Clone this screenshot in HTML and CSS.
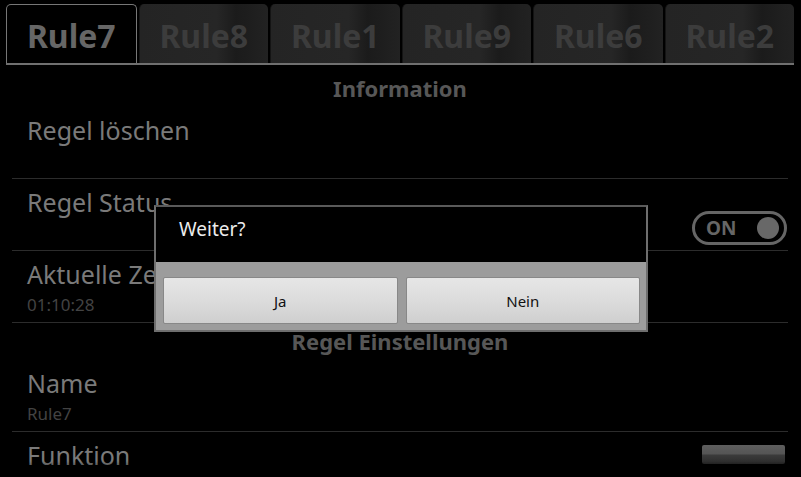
FILE: index.html
```html
<!DOCTYPE html>
<html lang="de">
<head>
    <meta charset="UTF-8">
    <meta name="viewport" content="width=device-width, initial-scale=1.0">
    <title>Regeln</title>
    <link rel="stylesheet" href="styles.css">
</head>
<body>
<div class="screen">
    <div class="tabs">
        <div class="tab tab-active">Rule7</div>
        <div class="tab">Rule8</div>
        <div class="tab">Rule1</div>
        <div class="tab">Rule9</div>
        <div class="tab">Rule6</div>
        <div class="tab">Rule2</div>
    </div>

    <div class="prefs">
        <div class="category category-first">Information</div>
        <div class="pref">
            <div class="pref-title">Regel löschen</div>
        </div>
        <div class="pref pref-switch">
            <div class="pref-title">Regel Status</div>
            <div class="toggle"><span class="toggle-label">ON</span><span class="knob"></span></div>
        </div>
        <div class="pref">
            <div class="pref-title">Aktuelle Zeit</div>
            <div class="pref-summary">01:10:28</div>
        </div>

        <div class="category">Regel Einstellungen</div>
        <div class="pref">
            <div class="pref-title">Name</div>
            <div class="pref-summary">Rule7</div>
        </div>
        <div class="pref pref-switch">
            <div class="pref-title">Funktion</div>
            <div class="spinner"></div>
        </div>
    </div>

    <div class="fade"></div>

    <!-- Bestätigungsdialog -->
    <div class="dialog">
        <div class="dialog-title">Weiter?</div>
        <div class="dialog-buttons">
            <button class="dialog-btn">Ja</button>
            <button class="dialog-btn">Nein</button>
        </div>
    </div>
</div>
</body>
</html>
```

FILE: styles.css
```css
body {
    margin: 0;
    background: #000;
    font-family: "Noto Sans", "Open Sans", sans-serif;
}
.screen {
    position: relative;
    width: 801px;
    height: 477px;
    overflow: hidden;
    background: #000;
}
.tabs {
    display: flex;
    gap: 2px;
    margin: 0 7px 0 6px;
    padding-top: 4px;
    border-bottom: 2px solid #707070;
}
.tab {
    flex: 1;
    height: 59px;
    box-sizing: border-box;
    padding-top: 3px;
    display: flex;
    align-items: center;
    justify-content: center;
    font-size: 32px;
    font-weight: bold;
    color: #3c3c3c;
    background: linear-gradient(90deg, #242424 0%, #262626 60%, #1b1b1b 75%, #222 100%);
    border-left: 1px solid #141414;
    border-radius: 5px 5px 0 0;
}
.tab-active {
    background: #000;
    color: #666;
    border: 1px solid #777;
    border-bottom: none;
}
.prefs {
    margin: 0 13px 0 12px;
}
.category {
    height: 37px;
    box-sizing: border-box;
    padding-top: 5px;
    text-align: center;
    font-size: 22px;
    line-height: 27px;
    font-weight: bold;
    color: #575757;
}
.category-first {
    margin-top: 5px;
}
.pref {
    height: 72px;
    box-sizing: border-box;
    padding: 8px 0 0 15px;
    border-bottom: 1px solid #2c2c2c;
}
.pref-switch {
    display: flex;
    justify-content: space-between;
}
.pref-title {
    font-size: 25px;
    line-height: 30px;
    color: #7a7a7a;
}
.pref-summary {
    margin-top: 5px;
    font-size: 17px;
    line-height: 22px;
    color: #434343;
}
.toggle {
    align-self: flex-end;
    margin: 0 1px 5px 0;
    width: 95px;
    height: 34px;
    box-sizing: border-box;
    border: 3px solid #666;
    border-radius: 17px;
    display: flex;
    align-items: center;
    justify-content: space-between;
    padding: 0 5px 0 11px;
}
.toggle-label {
    font-size: 19px;
    font-weight: bold;
    color: #666;
}
.knob {
    width: 22px;
    height: 22px;
    border-radius: 50%;
    background: #686868;
}
.spinner {
    margin: 5px 3px 0 0;
    width: 83px;
    height: 19px;
    border-radius: 2px;
    background: linear-gradient(#5e5e5e 0%, #555 45%, #3a3a3a 55%, #2a2a2a 100%);
}
.fade {
    position: absolute;
    left: 0;
    right: 0;
    bottom: 0;
    height: 16px;
    background: linear-gradient(rgba(0, 0, 0, 0), #000);
}
.dialog {
    position: absolute;
    left: 154px;
    top: 205px;
    width: 494px;
    height: 127px;
    box-sizing: border-box;
    border: 2px solid #6e6e6e;
    border-top-color: #5a5a5a;
    background: #000;
}
.dialog-title {
    height: 55px;
    box-sizing: border-box;
    padding: 9px 0 0 23px;
    font-size: 19px;
    line-height: 26px;
    color: #ececec;
}
.dialog-buttons {
    display: flex;
    gap: 8px;
    height: 68px;
    box-sizing: border-box;
    padding: 15px 6px 0 7px;
    background: #9c9c9c;
}
.dialog-btn {
    flex: 1;
    height: 47px;
    border: 1px solid #888;
    border-radius: 2px;
    background: linear-gradient(#e6e6e6 0%, #dcdcdc 50%, #cfcfcf 100%);
    font-family: "Noto Sans", "Open Sans", sans-serif;
    font-size: 15px;
    color: #111;
}
```
